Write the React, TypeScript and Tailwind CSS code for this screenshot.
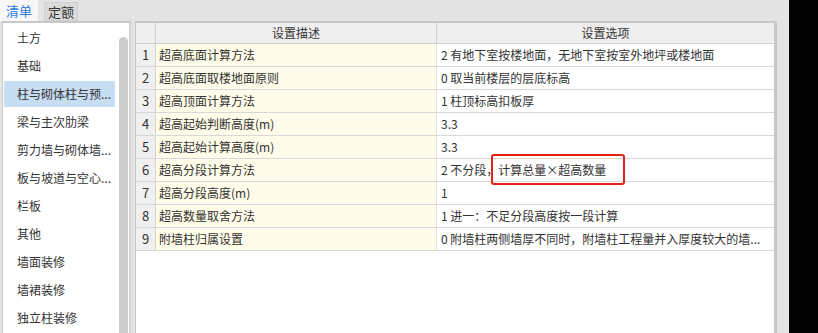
import React from "react";

const sideItems = [
  "土方",
  "基础",
  "柱与砌体柱与预...",
  "梁与主次肋梁",
  "剪力墙与砌体墙...",
  "板与坡道与空心...",
  "栏板",
  "其他",
  "墙面装修",
  "墙裙装修",
  "独立柱装修",
];

const rows: [string, string][] = [
  ["超高底面计算方法", "2 有地下室按楼地面，无地下室按室外地坪或楼地面"],
  ["超高底面取楼地面原则", "0 取当前楼层的层底标高"],
  ["超高顶面计算方法", "1 柱顶标高扣板厚"],
  ["超高起始判断高度(m)", "3.3"],
  ["超高起始计算高度(m)", "3.3"],
  ["超高分段计算方法", "2 不分段，计算总量×超高数量"],
  ["超高分段高度(m)", "1"],
  ["超高数量取舍方法", "1 进一：不足分段高度按一段计算"],
  ["附墙柱归属设置", "0 附墙柱两侧墙厚不同时，附墙柱工程量并入厚度较大的墙..."],
];

const font = { fontFamily: '"Noto Sans CJK SC", "Noto Sans", sans-serif' };

export default function App() {
  return (
    <div className="flex w-[818px] h-[333px] overflow-hidden text-[12px] text-[#333]" style={font}>
      <div className="flex flex-col w-[789px] h-full bg-[#e4e4e4]">
        {/* tabs */}
        <div className="flex h-[21px] items-end">
          <div className="flex h-[21px] w-[38px] items-center justify-center bg-[#f7f7f7] text-[13px] text-[#2b7de0]">清单</div>
          <div className="ml-[6px] flex h-[19px] w-[34px] items-center justify-center border border-[#cfcfcf] bg-[#dadada] text-[13px]">定额</div>
        </div>

        <div className="flex flex-1 min-h-0">
          {/* left list */}
          <div className="flex w-[129px] ml-[2px] border-l border-t-2 border-[#c8c8c8] bg-white">
            <div className="flex-1 pt-[1px]">
              {sideItems.map((s, i) => (
                <div key={s} className="h-[28px] py-[1px]">
                  <div
                    className={
                      "h-[26px] w-[111px] ml-[1px] pl-[13px] flex items-center whitespace-nowrap " +
                      (i === 2 ? "bg-[#c7ddf1]" : "")
                    }
                  >
                    {s}
                  </div>
                </div>
              ))}
            </div>
            <div className="w-[12px] flex flex-col pt-[14px] border-r-2 border-[#d6d6d6]">
              <div className="flex-1 w-[9px] rounded-t-[5px] bg-[#cdcdcd]" />
            </div>
          </div>

          {/* table */}
          <div className="ml-[4px] w-[642px] border-l border-t-2 border-r-[3px] border-[#c8c8c8] bg-white">
            <div className="flex h-[21px] bg-[#efefef] border-b border-[#d2d2d2]">
              <div className="w-[20px] border-r border-[#d2d2d2]" />
              <div className="w-[281px] border-r border-[#d2d2d2] flex items-center justify-center">设置描述</div>
              <div className="flex-1 flex items-center justify-center">设置选项</div>
            </div>
            {rows.map(([d, v], i) => (
              <div key={i} className="flex h-[23px] border-b border-[#d8d8d8]">
                <div className="w-[20px] border-r border-[#d2d2d2] bg-[#f0f0f0] flex items-center justify-center text-[13px]">
                  {i + 1}
                </div>
                <div className="w-[281px] border-r border-[#e2e2e2] bg-[#fffde9] flex items-center pl-[3px]">{d}</div>
                <div className="flex-1 min-w-0 flex items-center pl-[4px] pr-[6px]">
                  {i === 5 ? (
                    <span className="relative whitespace-nowrap">
                      2 不分段，
                      <span className="relative">
                        计算总量×超高数量
                        <span className="absolute left-[-7px] top-[-7px] w-[134px] h-[31px] border-2 border-[#e8201c] rounded-[3px]" />
                      </span>
                    </span>
                  ) : (
                    <span className="whitespace-nowrap overflow-hidden">{v}</span>
                  )}
                </div>
              </div>
            ))}
          </div>
        </div>
      </div>
      <div className="w-[29px] h-full bg-black" />
    </div>
  );
}
